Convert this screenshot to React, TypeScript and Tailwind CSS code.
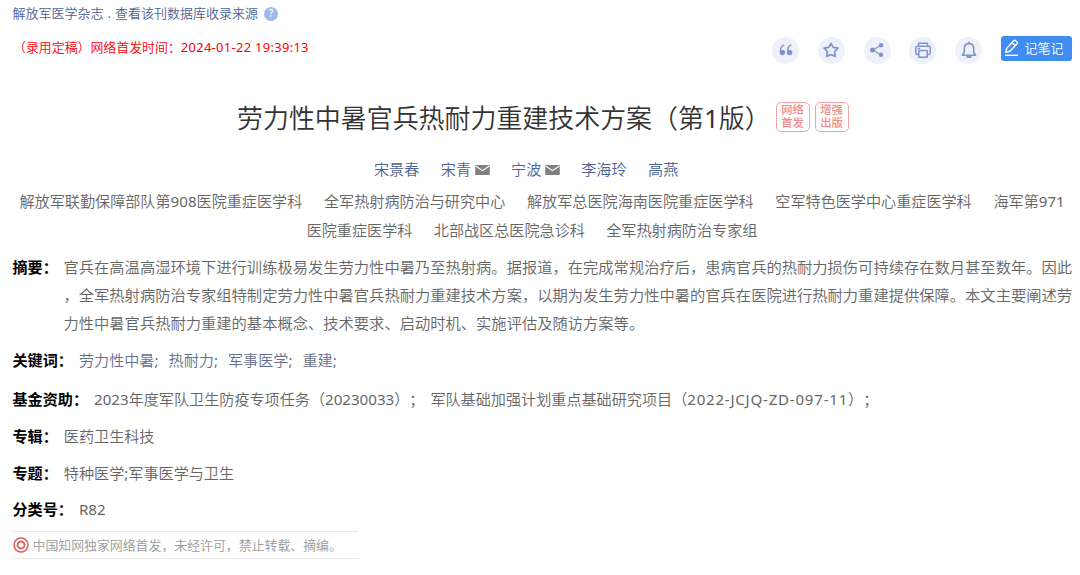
import type { ReactNode } from "react"

const authors = [
  { name: "宋景春" },
  { name: "宋青", mail: true },
  { name: "宁波", mail: true },
  { name: "李海玲" },
  { name: "高燕" },
]

const affiliations = [
  ["解放军联勤保障部队第908医院重症医学科", "全军热射病防治与研究中心", "解放军总医院海南医院重症医学科", "空军特色医学中心重症医学科", "海军第971"],
  ["医院重症医学科", "北部战区总医院急诊科", "全军热射病防治专家组"],
]

const abstractLines = [
  "官兵在高温高湿环境下进行训练极易发生劳力性中暑乃至热射病。据报道，在完成常规治疗后，患病官兵的热耐力损伤可持续存在数月甚至数年。因此",
  "，全军热射病防治专家组特制定劳力性中暑官兵热耐力重建技术方案，以期为发生劳力性中暑的官兵在医院进行热耐力重建提供保障。本文主要阐述劳",
  "力性中暑官兵热耐力重建的基本概念、技术要求、启动时机、实施评估及随访方案等。",
]

const keywords = ["劳力性中暑;", "热耐力;", "军事医学;", "重建;"]

// Latin runs are set one step heavier than the Chinese text around them
function Mixed({ text }: { text: string }) {
  return (
    <span>
      {text.split(/([\x21-\x7e]+)/).map((part, i) =>
        i % 2 ? <span key={i} className="font-normal">{part}</span> : part,
      )}
    </span>
  )
}

function MailIcon() {
  return (
    <svg width="15" height="10" viewBox="0 0 16 11" className="ml-[3.5px]">
      <rect width="16" height="11" rx="0.5" fill="#808080" />
      <path d="M0.5 1.2 8 6.2l7.5-5" fill="none" stroke="#fff" strokeWidth="1.3" />
    </svg>
  )
}

function RoundButton({ label, children }: { label: string; children: ReactNode }) {
  return (
    <button aria-label={label} className="flex size-[27px] items-center justify-center rounded-full bg-[#eef1f9]">
      <svg
        width="18"
        height="18"
        viewBox="0 0 18 18"
        fill="none"
        stroke="#8093ca"
        strokeWidth="1.5"
        strokeLinejoin="round"
        strokeLinecap="round"
      >
        {children}
      </svg>
    </button>
  )
}

function Toolbar() {
  return (
    <div className="flex items-center gap-[18.8px]">
      <RoundButton label="引用">
        <g fill="#8093ca" stroke="none">
          <circle cx="5.4" cy="11.5" r="2.7" />
          <circle cx="12.6" cy="11.5" r="2.7" />
        </g>
        <path d="M3.4 11.2C3.1 7.5 4.1 5.2 6.9 4.2M10.6 11.2c-.3-3.7.7-6 3.5-7" strokeWidth="1.4" />
      </RoundButton>
      <RoundButton label="收藏">
        <path d="m9 2.3 2.2 4.1 4.8.8-3.4 3.3.7 4.9L9 13.5l-4.3 1.9.7-4.9L2 7.2l4.8-.8z" strokeWidth="1.7" />
      </RoundButton>
      <RoundButton label="分享">
        <path d="M12.8 4.4 4.8 9l8 4.7" strokeWidth="1.2" />
        <g fill="#8093ca" stroke="none">
          <circle cx="4.5" cy="9" r="2.5" />
          <circle cx="13" cy="4.2" r="2.2" />
          <circle cx="13" cy="13.8" r="2.2" />
        </g>
      </RoundButton>
      <RoundButton label="打印">
        <path d="M4.5 5V2.2h9V5M4.5 13.4H3.2q-1.4 0-1.4-1.4V6.7q0-1.4 1.4-1.4h11.6q1.4 0 1.4 1.4V12q0 1.4-1.4 1.4h-1.3M4.8 9.5h8.4v6.7H4.8zM4.5 7.5h1" />
      </RoundButton>
      <RoundButton label="提醒">
        <path d="M9 2.6c-3 0-4.7 2-4.7 4.8v4l-1.9 2.9h13.2l-1.9-2.9v-4C13.7 4.6 12 2.6 9 2.6zM9 1.3v1" strokeWidth="1.6" />
        <path d="M7.4 16h3.2" strokeWidth="2" />
      </RoundButton>
      <button className="ml-[-0.5px] mb-[3px] flex h-[25px] w-[71.5px] items-center rounded-[3px] bg-[#3f8cf2] pl-[3px] text-[13px] text-white">
        <svg width="16" height="19" viewBox="0 0 16 19" fill="none" stroke="#fff" strokeWidth="1.4" strokeLinejoin="round" className="mr-[5px]">
          <path d="M1.8 13.3 2.6 9.6l6.9-7.8q1-1 2.1-.1l1.3 1q1 1 .1 2.1L6 12.2zM8 3.8l3.5 3" />
          <path d="M1 16.3h13" />
        </svg>
        <span>记笔记</span>
      </button>
    </div>
  )
}

function Stamp({ text }: { text: string }) {
  return (
    <span className="flex h-[30px] w-[34px] items-center justify-center rounded-[5px] border-[1.5px] border-[#f6a3a3]">
      <span className="w-[23px] whitespace-normal break-all text-[11.3px] font-medium leading-[12.5px] text-[#f38a8a]">{text}</span>
    </span>
  )
}

function Row({ label, children }: { label: string; children: ReactNode }) {
  return (
    <div className="flex h-[36.7px] items-center">
      <b className="mr-[6px] font-bold text-black">{label}</b>
      {children}
    </div>
  )
}

export default function App() {
  return (
    <main className="flex h-[575px] w-[1080px] flex-col overflow-hidden whitespace-nowrap bg-white font-['Noto_Sans','Noto_Sans_CJK_SC',sans-serif] text-[15.12px] font-[350] text-[#666] [text-spacing-trim:space-all]">
      <div className="flex h-[27px] items-center pl-[12.5px] text-[13px] text-[#4d6296]">
        <span>解放军医学杂志</span>
        <span className="mx-[4px] font-normal">.</span>
        <span>查看该刊数据库收录来源</span>
        <span className="ml-[6px] flex size-[14px] items-center justify-center rounded-full bg-[#9db9ea] text-[10px] font-medium text-white">?</span>
      </div>

      <div className="flex h-[46px] items-center justify-between pl-[13px] pr-[8px]">
        <div className="pb-[5px] text-[12.92px] text-[#f00]">
          （录用定稿）网络首发时间：<span className="font-normal tracking-[0.32px]">2024-01-22 19:39:13</span>
        </div>
        <Toolbar />
      </div>

      <div className="flex h-[89px] items-center pl-[237px] pt-[1px]">
        <h1 className="text-[25.95px] text-[#333]">
          <Mixed text="劳力性中暑官兵热耐力重建技术方案（第1版）" />
        </h1>
        <div className="ml-[5px] mb-[3px] flex gap-[5px]">
          <Stamp text="网络首发" />
          <Stamp text="增强出版" />
        </div>
      </div>

      <div className="flex h-[25px] items-center gap-[21.5px] pb-[10px] pl-[374px] text-[#4d6296]">
        {authors.map((a) => (
          <span key={a.name} className="flex items-center">
            {a.name}
            {a.mail && <MailIcon />}
          </span>
        ))}
      </div>

      <div className="flex flex-col">
        <div className="flex h-[29px] items-center gap-[21.7px] pl-[19.5px]">
          {affiliations[0].map((name) => (
            <Mixed key={name} text={name} />
          ))}
        </div>
        <div className="flex h-[29px] items-center justify-center gap-[21.4px] pr-[16px]">
          {affiliations[1].map((name) => (
            <Mixed key={name} text={name} />
          ))}
        </div>
      </div>

      <div className="mt-[8px] flex h-[89px] pl-[12.5px] leading-[28px]">
        <b className="w-[51px] shrink-0 font-bold text-black">摘要：</b>
        <div className="text-[15.29px]">
          {abstractLines.map((line) => (
            <p key={line} className="h-[28px]">{line}</p>
          ))}
        </div>
      </div>

      <div className="flex flex-col pl-[12.5px]">
        <Row label="关键词：">
          <span className="flex gap-[10px] text-[#666e8c]">
            {keywords.map((k) => (
              <Mixed key={k} text={k} />
            ))}
          </span>
        </Row>
        <div className="h-[2.5px]" />
        <Row label="基金资助：">
          <Mixed text="2023年度军队卫生防疫专项任务（20230033）；" />
          <span className="ml-[6px]">
            军队基础加强计划重点基础研究项目（
            <span className="font-normal tracking-[0.75px]">2022-JCJQ-ZD-097-11</span>
            ）；
          </span>
        </Row>
        <Row label="专辑：">医药卫生科技</Row>
        <Row label="专题：">
          <Mixed text="特种医学;军事医学与卫生" />
        </Row>
        <Row label="分类号：">
          <Mixed text="R82" />
        </Row>
      </div>

      <div className="ml-[12.5px] mt-[3.5px] flex h-[28px] w-[345px] items-center border-y border-[#e9e9e9] text-[12.9px] text-[#999]">
        <svg width="16" height="16" viewBox="0 0 16 16" fill="none" stroke="#e05a5a" className="mr-[4px]">
          <circle cx="8" cy="8" r="7" strokeWidth="1.5" />
          <circle cx="8" cy="8" r="3.5" strokeWidth="1.8" />
        </svg>
        中国知网独家网络首发，未经许可，禁止转载、摘编。
      </div>
    </main>
  )
}
